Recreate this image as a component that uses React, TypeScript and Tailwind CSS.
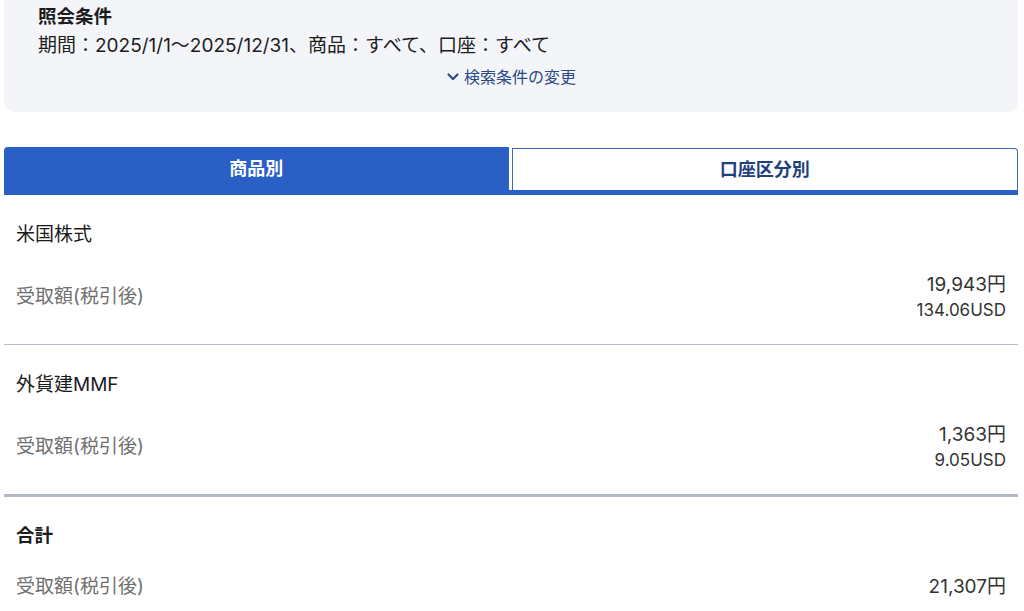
import React from "react";

const FONT = { fontFamily: '"Inter", "Noto Sans CJK JP", sans-serif' };

function Row({ name, amount, usd }: { name: string; amount: string; usd?: string }) {
  return (
    <div className="px-[12px] pt-[27px] pb-[22px]">
      <div className="text-[19px] leading-[26px] text-[#1c1c1c]">{name}</div>
      <div className="mt-[24px] flex items-center justify-between">
        <div className="text-[19px] leading-[26px] text-[#707070]">受取額(税引後)</div>
        <div className="flex flex-col items-end text-[#333333]">
          <div className="text-[19px] leading-[26px]">{amount}</div>
          {usd && <div className="text-[17px] leading-[24px]">{usd}</div>}
        </div>
      </div>
    </div>
  );
}

export default function App() {
  return (
    <div className="w-[1024px] min-h-[611px] bg-white overflow-hidden" style={FONT}>
      <div className="ml-[4px] mr-[6px] rounded-b-[10px] bg-[#f4f5f8] pt-[3px] pb-[24px]">
        <div className="pl-[34px] text-[18.5px] leading-[26px] font-bold text-[#1c1c1c]">照会条件</div>
        <div className="pl-[34px] mt-[4px] text-[19px] leading-[26px] text-[#1c1c1c]">
          期間：2025/1/1〜2025/12/31、商品：すべて、口座：すべて
        </div>
        <div className="mt-[7px] flex justify-center">
          <div className="flex items-center gap-[4px] text-[16px] leading-[22px] text-[#2b4a88]">
            <svg width="14" height="14" viewBox="0 0 14 14" fill="none">
              <polyline points="2.5,4.5 7,9 11.5,4.5" stroke="#2b4a88" strokeWidth="2.2" strokeLinecap="round" strokeLinejoin="round" />
            </svg>
            <span>検索条件の変更</span>
          </div>
        </div>
      </div>

      <div className="ml-[4px] mr-[6px] mt-[35px] flex flex-col">
        <div className="flex h-[43px] gap-[3px]">
          <div className="flex flex-1 items-center justify-center rounded-tl-[4px] bg-[#2a5fc5] text-[18px] font-bold text-white">
            商品別
          </div>
          <div className="mt-[1px] flex flex-1 items-center justify-center rounded-tr-[4px] border border-b-0 border-[#3f68b5] bg-white text-[18px] font-bold text-[#1f3f7d]">
            口座区分別
          </div>
        </div>
        <div className="h-[5px] bg-[#2a5fc5]" />
      </div>

      <div className="ml-[4px] mr-[6px]">
        <Row name="米国株式" amount="19,943円" usd="134.06USD" />
        <div className="h-[1px] bg-[#b9bfca]" />
        <Row name="外貨建MMF" amount="1,363円" usd="9.05USD" />
        <div className="h-[3px] bg-[#b3bac6]" />
        <div className="px-[12px] pt-[25px]">
          <div className="text-[18.5px] leading-[26px] font-bold text-[#1c1c1c]">合計</div>
          <div className="mt-[26px] flex items-center justify-between">
            <div className="text-[19px] leading-[26px] text-[#707070]">受取額(税引後)</div>
            <div className="text-[19px] leading-[26px] text-[#333333]">21,307円</div>
          </div>
        </div>
      </div>
    </div>
  );
}
